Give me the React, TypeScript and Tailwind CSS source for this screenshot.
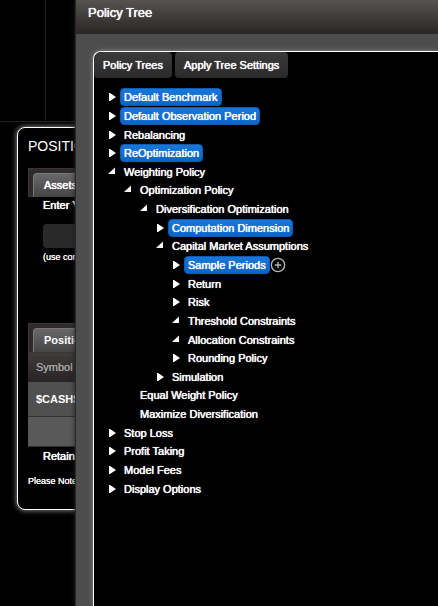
import { CirclePlus } from "lucide-react";

type State = "closed" | "open" | "leaf";

type TreeNode = {
  label: string;
  state: State;
  active?: boolean;
  addable?: boolean;
  level: 0 | 1 | 2 | 3 | 4;
};

const nodes: TreeNode[] = [
  { label: "Default Benchmark", level: 0, state: "closed", active: true },
  { label: "Default Observation Period", level: 0, state: "closed", active: true },
  { label: "Rebalancing", level: 0, state: "closed" },
  { label: "ReOptimization", level: 0, state: "closed", active: true },
  { label: "Weighting Policy", level: 0, state: "open" },
  { label: "Optimization Policy", level: 1, state: "open" },
  { label: "Diversification Optimization", level: 2, state: "open" },
  { label: "Computation Dimension", level: 3, state: "closed", active: true },
  { label: "Capital Market Assumptions", level: 3, state: "open" },
  { label: "Sample Periods", level: 4, state: "closed", active: true, addable: true },
  { label: "Return", level: 4, state: "closed" },
  { label: "Risk", level: 4, state: "closed" },
  { label: "Threshold Constraints", level: 4, state: "open" },
  { label: "Allocation Constraints", level: 4, state: "open" },
  { label: "Rounding Policy", level: 4, state: "closed" },
  { label: "Simulation", level: 3, state: "closed" },
  { label: "Equal Weight Policy", level: 1, state: "leaf" },
  { label: "Maximize Diversification", level: 1, state: "leaf" },
  { label: "Stop Loss", level: 0, state: "closed" },
  { label: "Profit Taking", level: 0, state: "closed" },
  { label: "Model Fees", level: 0, state: "closed" },
  { label: "Display Options", level: 0, state: "closed" },
];

const indent = ["pl-3", "pl-7", "pl-11", "pl-[60px]", "pl-[76px]"];

function Arrow({ state }: { state: State }) {
  return (
    <svg width="10" height="10" viewBox="0 0 10 10" className="shrink-0" aria-hidden="true">
      {state === "closed" && <path d="M3 1 H4 L10 5 L4 9 H3 Z" fill="#fff" />}
      {state === "open" && <path d="M9 0.5 V7 H2 Z" fill="#fff" />}
    </svg>
  );
}

function TreeRow({ node }: { node: TreeNode }) {
  return (
    <li
      role="treeitem"
      aria-level={node.level + 1}
      aria-expanded={node.state === "leaf" ? undefined : node.state === "open"}
      className={`flex items-center whitespace-nowrap ${indent[node.level]}`}
    >
      <Arrow state={node.state} />
      <button
        type="button"
        className={
          node.active
            ? "ml-1 h-[18px] rounded border border-[#0b5cb8] bg-linear-to-b from-[#1877d8] to-[#0865c8] px-[3px] leading-4 [text-shadow:0_0_0_#fff,0_0_1px_#fff]"
            : "ml-1 h-[18px] px-1 leading-[18px] [text-shadow:0_0_0_#fff,0_0_1px_#fff]"
        }
      >
        {node.label}
      </button>
      {node.addable && (
        <button type="button" aria-label="Add sample period" className="text-[#b5b5b5]">
          <CirclePlus size={16} strokeWidth={2} />
        </button>
      )}
    </li>
  );
}

function PositionsPage() {
  return (
    <main className="min-h-screen text-[11px] whitespace-nowrap text-white">
      <div className="flex h-[122px] border-b border-[#20202a]">
        <div className="w-[46px] border-r border-[#20202a]" />
      </div>
      <section className="mt-[5px] ml-[17px] h-[383px] rounded-lg border border-white bg-black pl-2.5 shadow-[0_0_5px_1px_#777]">
        <h2 className="pt-2 text-sm leading-5">POSITIONS</h2>
        <div className="mt-3 h-[29px] border border-[#3a3635] bg-[#302b2a] pt-1 pl-1">
          <h3 className="h-6 rounded-tl border-t border-l border-[#777] bg-linear-to-b from-[#686868] to-[#454545] pl-2.5 leading-[22px] [text-shadow:0_0_0_#fff,0_0_1px_#fff]">
            Assets
          </h3>
        </div>
        <div className="pl-[15px]">
          <label htmlFor="cash" className="block h-5 leading-4 [text-shadow:0_0_0_#fff,0_0_1px_#fff]">
            Enter Your Cash
          </label>
          <input id="cash" className="mt-[7px] block h-6 w-40 rounded bg-[#292929] px-2 outline-none" />
          <p className="mt-[3px] text-[9px] leading-3 [text-shadow:0_0_0_#fff]">(use commas)</p>
        </div>
        <div className="mt-[60px] h-[30px] border border-[#3a3635] bg-[#302b2a] pt-1 pl-1">
          <h3 className="h-6 rounded-tl border-t border-l border-[#777] bg-linear-to-b from-[#686868] to-[#454545] pl-2.5 font-bold leading-[22px]">
            Positions
          </h3>
        </div>
        <table className="w-full border-collapse text-left">
          <thead>
            <tr className="h-[29px] bg-linear-to-b from-[#3f3c3b] to-[#292423] text-[#a5a5a5]">
              <th className="pl-2 font-normal [text-shadow:0_0_0_#a5a5a5]">Symbol</th>
            </tr>
          </thead>
          <tbody>
            <tr className="h-[34px] bg-[#505050]">
              <td className="pl-2 font-bold">$CASH$</td>
            </tr>
            <tr className="h-[30px] border-y border-[#303030] bg-[#595959]">
              <td />
            </tr>
          </tbody>
        </table>
        <p className="pl-[15px] leading-[18px] [text-shadow:0_0_0_#fff,0_0_1px_#fff]">Retain</p>
        <p className="mt-1.5 text-[9px] leading-5 [text-shadow:0_0_0_#fff]">Please Note</p>
      </section>
    </main>
  );
}

function PolicyDialog() {
  return (
    <div
      role="dialog"
      aria-labelledby="dialog-title"
      className="absolute inset-y-0 right-0 left-[75px] flex flex-col border-l border-[#292929] bg-[#4d4d4d] text-[11px] text-[#f4f4f4] shadow-[0_0_5px_#222]"
    >
      <header className="h-[34px] bg-linear-to-b from-[#555350] to-[#2b2626] pl-3">
        <h1 id="dialog-title" className="text-[13px] leading-[25px] [text-shadow:0_0_0_#fff,0_0_1px_#fff]">
          Policy Tree
        </h1>
      </header>
      <section className="mt-[17px] ml-[17px] flex-1 rounded-tl-lg border-t border-l border-white bg-black shadow-[0_0_5px_#888]">
        <div role="tablist" className="flex gap-[3px]">
          <button
            type="button"
            role="tab"
            aria-selected="true"
            className="h-[26px] rounded rounded-tl-lg bg-linear-to-b from-[#3b3b3b] to-[#2a2a2a] px-[9px] leading-6 [text-shadow:0_0_0_#fff,0_0_1px_#fff]"
          >
            Policy Trees
          </button>
          <button
            type="button"
            role="tab"
            aria-selected="false"
            className="h-[26px] rounded bg-linear-to-b from-[#3b3b3b] to-[#2a2a2a] px-[9px] leading-6 [text-shadow:0_0_0_#fff,0_0_1px_#fff]"
          >
            Apply Tree Settings
          </button>
        </div>
        <ul role="tree" aria-label="Policy tree" className="mt-2.5 grid h-[410px] auto-rows-[minmax(0,1fr)]">
          {nodes.map((node) => (
            <TreeRow key={node.label} node={node} />
          ))}
        </ul>
      </section>
    </div>
  );
}

export default function App() {
  return (
    <div className="relative min-h-screen overflow-hidden bg-black font-['Liberation_Sans',Arial,sans-serif]">
      <PositionsPage />
      <PolicyDialog />
    </div>
  );
}
